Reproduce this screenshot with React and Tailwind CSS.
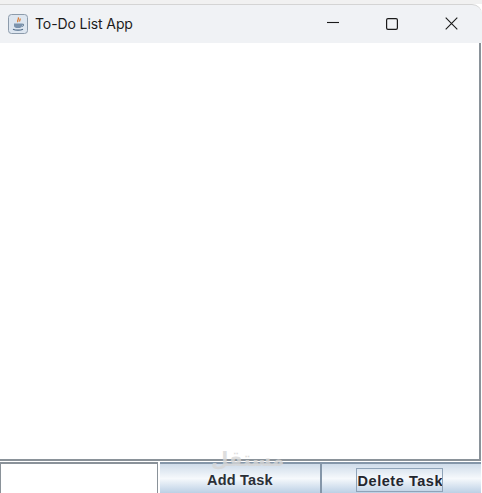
export default function App() {
  return (
    <div className="w-[482px] h-[493px] overflow-hidden relative flex flex-col bg-white font-['Liberation_Sans',sans-serif]">
      <div className="h-[4px] shrink-0 bg-[#f1f1f1]" />
      <div className="h-[39px] shrink-0 flex items-center justify-between bg-[#f0f2f5] border-t border-[#d4d4d4] rounded-tr-[10px] pl-[8px] pb-[1px]">
        <div className="flex items-center gap-[7px]">
          <svg width="20" height="20" viewBox="0 0 20 20">
            <rect x="0.5" y="0.5" width="19" height="19" rx="3" fill="#dde6f0" stroke="#8c9bab" />
            <path d="M10 3.5c1.8 1.6-1.6 2.6 0 4.6M12 4.5c.8 1-1 1.8 0 3" stroke="#d9762b" strokeWidth="1.2" fill="none" />
            <path d="M6 9.5h8v2.2c0 1.6-1.4 2.4-4 2.4s-4-.8-4-2.4z" fill="#7b93ad" />
            <path d="M14 10.2h1.4v1.6L14 12.4" stroke="#5b7590" fill="none" />
            <path d="M5 15.2c2.5 1.2 7.5 1.2 10 0" stroke="#4f6b88" strokeWidth="1.1" fill="none" />
          </svg>
          <span className="text-[14px] text-[#1c1c1c] font-['Inter',sans-serif] tracking-[-0.1px]">To-Do List App</span>
        </div>
        <div className="flex items-center h-full pr-[1px]">
          <button className="w-[59px] h-full flex items-center justify-center">
            <svg width="12" height="12" viewBox="0 0 12 12"><path d="M0 4.5h12" stroke="#1a1a1a" strokeWidth="1.1" /></svg>
          </button>
          <button className="w-[59px] h-full flex items-center justify-center">
            <svg width="12" height="12" viewBox="0 0 12 12"><rect x="0.6" y="0.6" width="10.8" height="10.8" rx="1.4" fill="none" stroke="#1a1a1a" strokeWidth="1.2" /></svg>
          </button>
          <button className="w-[60px] h-full flex items-center justify-center">
            <svg width="13" height="13" viewBox="0 0 13 13"><path d="M.7.7l11.6 11.6M12.3.7.7 12.3" stroke="#1a1a1a" strokeWidth="1.1" fill="none" /></svg>
          </button>
        </div>
      </div>
      <div className="flex-1 flex flex-col pr-[1px]">
        <div className="flex-1 bg-white border-r-2 border-b-2 border-[#8a9299] mb-[1px]" />
        <div className="h-[31px] shrink-0 flex">
          <div className="w-[158px] bg-white border-t-2 border-l border-r border-[#8a9299]" />
          <div className="w-[2px]" />
          <div className="w-[160px] border-t-2 border-[#8496a9] bg-gradient-to-b from-[#cfdcea] via-[#f6f9fc] to-[#bcd0e5] flex items-center justify-center">
            <span className="text-[14.5px] font-bold text-[#2b2f36] tracking-[0.2px] pt-[5px]">Add Task</span>
          </div>
          <div className="w-[161px] border-l-2 border-t-2 border-[#8496a9] bg-gradient-to-b from-[#cfdcea] via-[#f6f9fc] to-[#bcd0e5] flex items-center justify-center">
            <span className="text-[14.5px] font-bold text-[#23262e] tracking-[0.55px] border border-[#8fa3b8] h-[24px] w-[87px] mt-[3px] mr-[5px] overflow-hidden whitespace-nowrap leading-[24px] pl-[1px] block">Delete Task</span>
          </div>
        </div>
      </div>
      <span dir="rtl" className="absolute left-[211px] top-[448px] text-[20px] leading-[22px] font-bold text-[#d6d6d6] opacity-80 font-['DejaVu_Sans',sans-serif]">مستقل</span>
    </div>
  );
}
